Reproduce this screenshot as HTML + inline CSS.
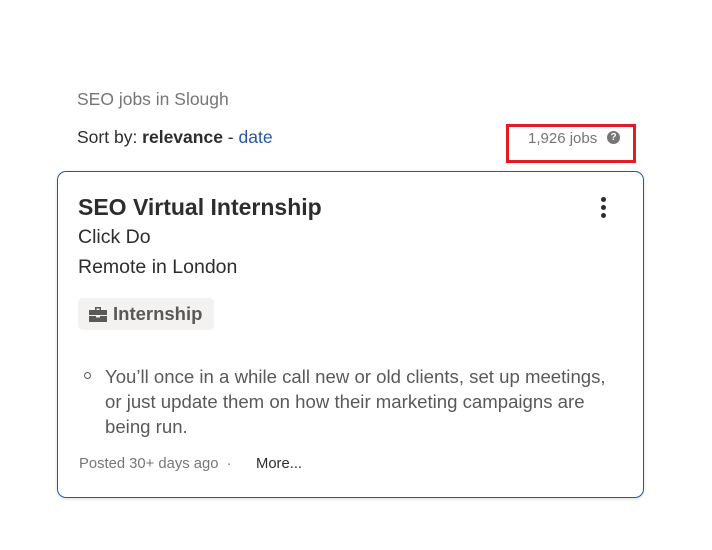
<!DOCTYPE html>
<html><head><style>
body{margin:0;width:712px;height:550px;background:#fff;font-family:"Liberation Sans",sans-serif;position:relative;overflow:hidden}
.a{position:absolute;white-space:nowrap}
</style></head><body>
<div class="a" style="left:77px;top:89px;font-size:17.5px;color:#767676">SEO jobs in Slough</div>
<div class="a" style="left:77px;top:127px;font-size:17.5px;color:#2d2d2d">Sort by: <b>relevance</b> - <span style="color:#2557a7">date</span></div>
<div class="a" style="left:506px;top:124px;width:124px;height:33px;border:3px solid #e31c24"></div>
<div class="a" style="left:528px;top:130px;font-size:15px;color:#767676">1,926 jobs</div>
<div class="a" style="left:607px;top:131px;width:13px;height:13px;border-radius:50%;background:#767676;color:#fff;font-size:10px;font-weight:bold;text-align:center;line-height:13px">?</div>
<div class="a" style="left:57px;top:171px;width:585px;height:325px;border:1px solid #2557a7;border-radius:9px;box-shadow:0 1px 3px rgba(0,0,0,.15)"></div>
<div class="a" style="left:78px;top:194px;font-size:23px;font-weight:bold;color:#2d2d2d">SEO Virtual Internship</div>
<div class="a" style="left:601px;top:197px;width:5px;height:5px;border-radius:50%;background:#2d2d2d;box-shadow:0 8px 0 #2d2d2d,0 16px 0 #2d2d2d"></div>
<div class="a" style="left:78px;top:226px;font-size:19.5px;color:#2d2d2d">Click Do</div>
<div class="a" style="left:78px;top:256px;font-size:19.5px;color:#2d2d2d">Remote in London</div>
<div class="a" style="left:78px;top:298px;width:136px;height:32px;background:#f3f2f1;border-radius:5px"></div>
<svg class="a" style="left:88px;top:306px" width="20" height="17" viewBox="0 0 20 17"><path d="M7 1h6v3h-1.5V2.5h-3V4H7z M1 4h18v5H1z M1 10h7v1.5h4V10h7v6H1z" fill="#595959"/></svg>
<div class="a" style="left:113px;top:303px;font-size:18.5px;font-weight:bold;color:#595959">Internship</div>
<div class="a" style="left:84px;top:372px;width:5px;height:5px;border:1.3px solid #595959;border-radius:50%"></div>
<div class="a" style="left:105px;top:364px;font-size:18.6px;line-height:25px;color:#595959">You’ll once in a while call new or old clients, set up meetings,<br>or just update them on how their marketing campaigns are<br>being run.</div>
<div class="a" style="left:79px;top:456px;font-size:14.8px;color:#767676">Posted 30+ days ago &nbsp;·</div>
<div class="a" style="left:256px;top:456px;font-size:14.8px;color:#2d2d2d">More...</div>
</body></html>
